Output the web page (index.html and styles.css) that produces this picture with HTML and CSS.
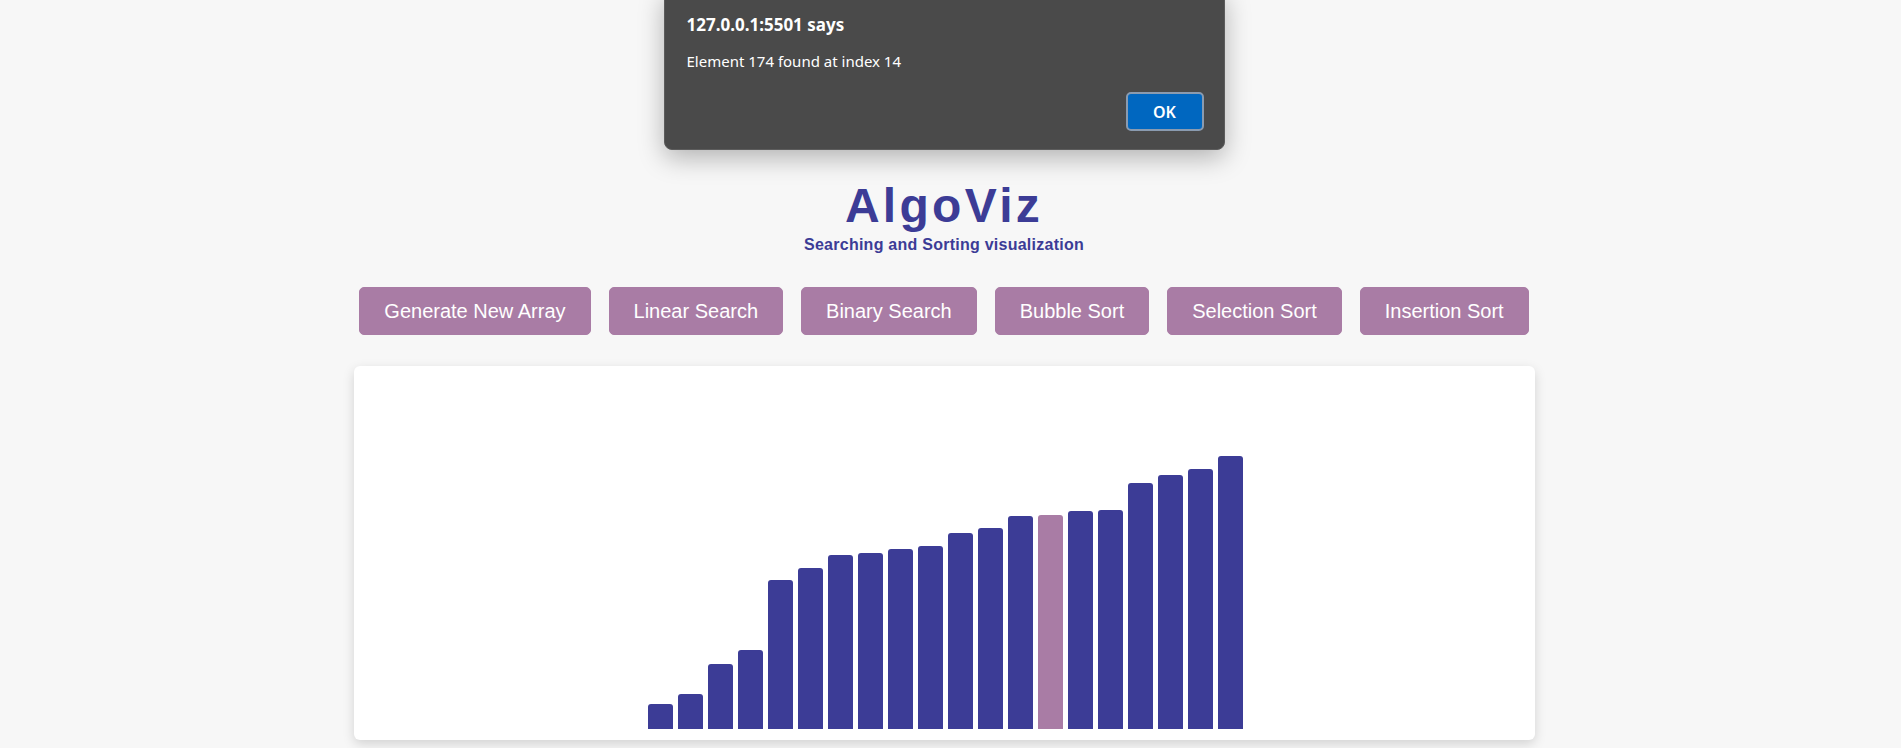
FILE: index.html
```html
<!DOCTYPE html>
<html lang="en">
<head>
<meta charset="UTF-8">
<title>AlgoViz</title>
<link rel="stylesheet" href="styles.css">
</head>
<body>
  <header class="header">
    <h1 class="title">AlgoViz</h1>
    <p class="subtitle">Searching and Sorting visualization</p>
  </header>
  <nav class="controls">
    <button class="btn">Generate New Array</button>
    <button class="btn">Linear Search</button>
    <button class="btn">Binary Search</button>
    <button class="btn">Bubble Sort</button>
    <button class="btn">Selection Sort</button>
    <button class="btn">Insertion Sort</button>
  </nav>
  <main class="card">
    <div class="bars">
      <div class="bar" style="height:25px"></div>
      <div class="bar" style="height:35px"></div>
      <div class="bar" style="height:65px"></div>
      <div class="bar" style="height:79px"></div>
      <div class="bar" style="height:149px"></div>
      <div class="bar" style="height:161px"></div>
      <div class="bar" style="height:174px"></div>
      <div class="bar" style="height:176px"></div>
      <div class="bar" style="height:180px"></div>
      <div class="bar" style="height:183px"></div>
      <div class="bar" style="height:196px"></div>
      <div class="bar" style="height:201px"></div>
      <div class="bar" style="height:213px"></div>
      <div class="bar found" style="height:214px"></div>
      <div class="bar" style="height:218px"></div>
      <div class="bar" style="height:219px"></div>
      <div class="bar" style="height:246px"></div>
      <div class="bar" style="height:254px"></div>
      <div class="bar" style="height:260px"></div>
      <div class="bar" style="height:273px"></div>
    </div>
  </main>
  <div class="dialog">
    <div class="dialog-title">127.0.0.1:5501 says</div>
    <div class="dialog-msg">Element 174 found at index 14</div>
    <div class="dialog-actions">
      <button class="dialog-ok">OK</button>
    </div>
  </div>
</body>
</html>
```
FILE: styles.css
```css
html, body {
  height: 100%;
}
body {
  margin: 0 13px 0 0;
  position: relative;
  background: #f7f7f7;
  font-family: "Liberation Sans", Arial, sans-serif;
  overflow: hidden;
}
.header {
  padding-top: 182px;
  text-align: center;
}
.title {
  margin: 0;
  font-size: 48px;
  line-height: 48px;
  font-weight: bold;
  letter-spacing: 3.3px;
  color: #3c3c96;
}
.subtitle {
  margin: 5px 0 0;
  font-size: 16px;
  line-height: 20px;
  font-weight: bold;
  letter-spacing: 0.25px;
  color: #3c3c96;
}
.controls {
  display: flex;
  justify-content: center;
  gap: 18px;
  margin-top: 32px;
}
.btn {
  height: 48px;
  padding: 0 24px;
  border: 1px solid #a97ca5;
  border-radius: 5px;
  background: #a97ca5;
  color: #ffffff;
  font-family: "Liberation Sans", Arial, sans-serif;
  font-size: 20px;
  cursor: pointer;
}
.card {
  box-sizing: border-box;
  width: 1181px;
  height: 374px;
  margin: 31px auto 0;
  padding: 0 0 11px 2px;
  background: #ffffff;
  border-radius: 6px;
  box-shadow: 0 4px 12px rgba(0, 0, 0, 0.15);
  display: flex;
  align-items: flex-end;
  justify-content: center;
}
.bars {
  display: flex;
  align-items: flex-end;
  gap: 5px;
}
.bar {
  width: 25px;
  background: #3c3c96;
  border-radius: 3px 3px 0 0;
}
.bar.found {
  background: #a97ca5;
}
.dialog {
  position: absolute;
  top: -11px;
  left: calc(50% - 280.5px);
  width: 561px;
  box-sizing: border-box;
  padding: 25px 20px 18px 22px;
  background: #4a4a4a;
  border: 1px solid #5c5c5c;
  border-radius: 8px;
  box-shadow: 0 8px 26px rgba(0, 0, 0, 0.28);
  color: #ffffff;
  font-family: "Noto Sans", "Open Sans", sans-serif;
}
.dialog-title {
  font-size: 17px;
  line-height: 20px;
  font-weight: bold;
}
.dialog-msg {
  margin-top: 16px;
  font-size: 15px;
  line-height: 20px;
}
.dialog-actions {
  display: flex;
  justify-content: flex-end;
  margin-top: 21px;
}
.dialog-ok {
  width: 78px;
  height: 39px;
  box-sizing: border-box;
  border: 2px solid #8a9bb0;
  border-radius: 5px;
  background: #0067c0;
  color: #ffffff;
  font-family: "Noto Sans", "Open Sans", sans-serif;
  font-size: 16px;
  font-weight: 600;
}
```
